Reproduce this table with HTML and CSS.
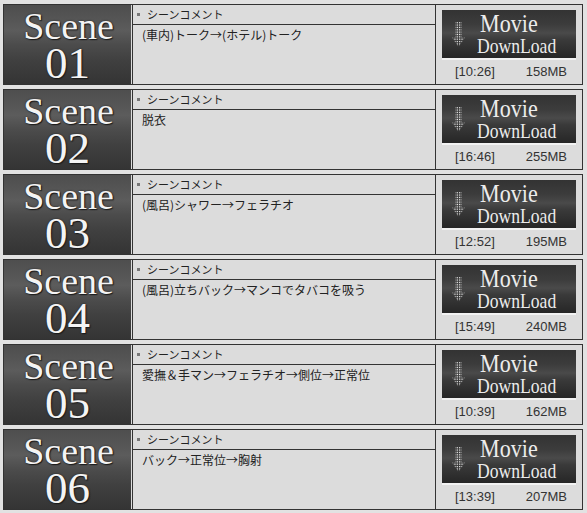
FILE: index.html
```html
<!DOCTYPE html>
<html lang="ja">
<head>
<meta charset="utf-8">
<link rel="stylesheet" href="styles.css">
</head>
<body>
<svg width="0" height="0" class="defs">
  <defs>
    <pattern id="dots" width="2" height="2" patternUnits="userSpaceOnUse">
      <rect width="1" height="1" fill="#ffffff"/>
    </pattern>
    <symbol id="arrow" viewBox="0 0 15 29">
      <path d="M4 0H11V18H15L7.5 29L0 18H4Z" fill="url(#dots)"/>
    </symbol>
  </defs>
</svg>
<div class="list">
  <div class="scene">
    <div class="thumb"><div class="thumb-in"><span class="t1">Scene</span><span class="t2">01</span></div></div>
    <div class="comment"><div class="head"><i class="sq"></i>シーンコメント</div><div class="body">(車内)トーク→(ホテル)トーク</div></div>
    <div class="dl"><div class="btn"><svg class="arr"><use href="#arrow"/></svg><div class="lbl"><span class="mv">Movie</span><span class="dwn">DownLoad</span></div></div><div class="meta"><span>[10:26]</span><span>158MB</span></div></div>
  </div>
  <div class="scene">
    <div class="thumb"><div class="thumb-in"><span class="t1">Scene</span><span class="t2">02</span></div></div>
    <div class="comment"><div class="head"><i class="sq"></i>シーンコメント</div><div class="body">脱衣</div></div>
    <div class="dl"><div class="btn"><svg class="arr"><use href="#arrow"/></svg><div class="lbl"><span class="mv">Movie</span><span class="dwn">DownLoad</span></div></div><div class="meta"><span>[16:46]</span><span>255MB</span></div></div>
  </div>
  <div class="scene">
    <div class="thumb"><div class="thumb-in"><span class="t1">Scene</span><span class="t2">03</span></div></div>
    <div class="comment"><div class="head"><i class="sq"></i>シーンコメント</div><div class="body">(風呂)シャワー→フェラチオ</div></div>
    <div class="dl"><div class="btn"><svg class="arr"><use href="#arrow"/></svg><div class="lbl"><span class="mv">Movie</span><span class="dwn">DownLoad</span></div></div><div class="meta"><span>[12:52]</span><span>195MB</span></div></div>
  </div>
  <div class="scene">
    <div class="thumb"><div class="thumb-in"><span class="t1">Scene</span><span class="t2">04</span></div></div>
    <div class="comment"><div class="head"><i class="sq"></i>シーンコメント</div><div class="body">(風呂)立ちバック→マンコでタバコを吸う</div></div>
    <div class="dl"><div class="btn"><svg class="arr"><use href="#arrow"/></svg><div class="lbl"><span class="mv">Movie</span><span class="dwn">DownLoad</span></div></div><div class="meta"><span>[15:49]</span><span>240MB</span></div></div>
  </div>
  <div class="scene">
    <div class="thumb"><div class="thumb-in"><span class="t1">Scene</span><span class="t2">05</span></div></div>
    <div class="comment"><div class="head"><i class="sq"></i>シーンコメント</div><div class="body">愛撫＆手マン→フェラチオ→側位→正常位</div></div>
    <div class="dl"><div class="btn"><svg class="arr"><use href="#arrow"/></svg><div class="lbl"><span class="mv">Movie</span><span class="dwn">DownLoad</span></div></div><div class="meta"><span>[10:39]</span><span>162MB</span></div></div>
  </div>
  <div class="scene">
    <div class="thumb"><div class="thumb-in"><span class="t1">Scene</span><span class="t2">06</span></div></div>
    <div class="comment"><div class="head"><i class="sq"></i>シーンコメント</div><div class="body">バック→正常位→胸射</div></div>
    <div class="dl"><div class="btn"><svg class="arr"><use href="#arrow"/></svg><div class="lbl"><span class="mv">Movie</span><span class="dwn">DownLoad</span></div></div><div class="meta"><span>[13:39]</span><span>207MB</span></div></div>
  </div>
</div>
</body>
</html>
```
FILE: styles.css
```css
html, body {
  margin: 0;
  padding: 0;
  background: #e2e2e2;
}
body {
  font-family: "Noto Sans CJK JP", "Liberation Sans", sans-serif;
  color: #222;
}
.defs {
  position: absolute;
  width: 0;
  height: 0;
}
.list {
  display: flex;
  flex-direction: column;
  gap: 4px;
  padding: 4px 0 0 3px;
}
.scene {
  width: 578px;
  height: 79px;
  border: 1px solid #333;
  display: grid;
  grid-template-columns: 128px 302px 146px;
  column-gap: 1px;
  background: #333;
}
.thumb {
  background: #dcdcdc;
  padding-right: 1px;
}
.thumb-in {
  height: 100%;
  background: linear-gradient(180deg, #4e4e4e 0%, #565656 20%, #5c5c5c 32%, #4c4c4c 50%, #404040 70%, #343434 100%);
  display: flex;
  flex-direction: column;
  align-items: center;
  font-family: "Liberation Serif", "DejaVu Serif", serif;
  color: #f4f4f4;
  text-shadow: 1px 1px 1px #1a1a1a, 0 0 2px #222;
}
.t1 {
  font-size: 38px;
  line-height: 36px;
  margin-top: 3px;
  margin-left: 2px;
}
.t2 {
  font-size: 45px;
  line-height: 38px;
}
.comment {
  background: #dcdcdc;
  display: flex;
  flex-direction: column;
}
.head {
  height: 19px;
  border-bottom: 1px solid #333;
  font-size: 11px;
  line-height: 19px;
  color: #222;
  display: flex;
  align-items: center;
  padding-left: 4px;
}
.sq {
  width: 3px;
  height: 3px;
  background: #777;
  margin-right: 7px;
}
.body {
  font-size: 12px;
  line-height: 16px;
  padding: 2px 9px;
  color: #222;
}
.dl {
  background: #dcdcdc;
  padding: 5px 6px 0 6px;
  display: flex;
  flex-direction: column;
}
.btn {
  height: 48px;
  border-bottom: 2px solid #f2f2f2;
  background: linear-gradient(180deg, #333 0%, #3c3c3c 30%, #4a4a4a 48%, #3a3a3a 62%, #262626 100%);
  display: flex;
  align-items: center;
}
.arr {
  width: 15px;
  height: 29px;
  margin-left: 10px;
  margin-right: 12px;
}
.lbl {
  display: flex;
  flex-direction: column;
  font-family: "Liberation Serif", "DejaVu Serif", serif;
  color: #ececec;
}
.mv {
  font-size: 26px;
  line-height: 24px;
  height: 24px;
  transform: scaleX(0.85);
  transform-origin: left center;
  margin-left: 3px;
}
.dwn {
  font-size: 22px;
  line-height: 20px;
  height: 20px;
  transform: scaleX(0.8);
  transform-origin: left center;
  white-space: nowrap;
}
.meta {
  display: flex;
  justify-content: space-between;
  font-family: "Liberation Sans", sans-serif;
  font-size: 13px;
  color: #333;
  padding: 4px 9px 0 13px;
}
```
